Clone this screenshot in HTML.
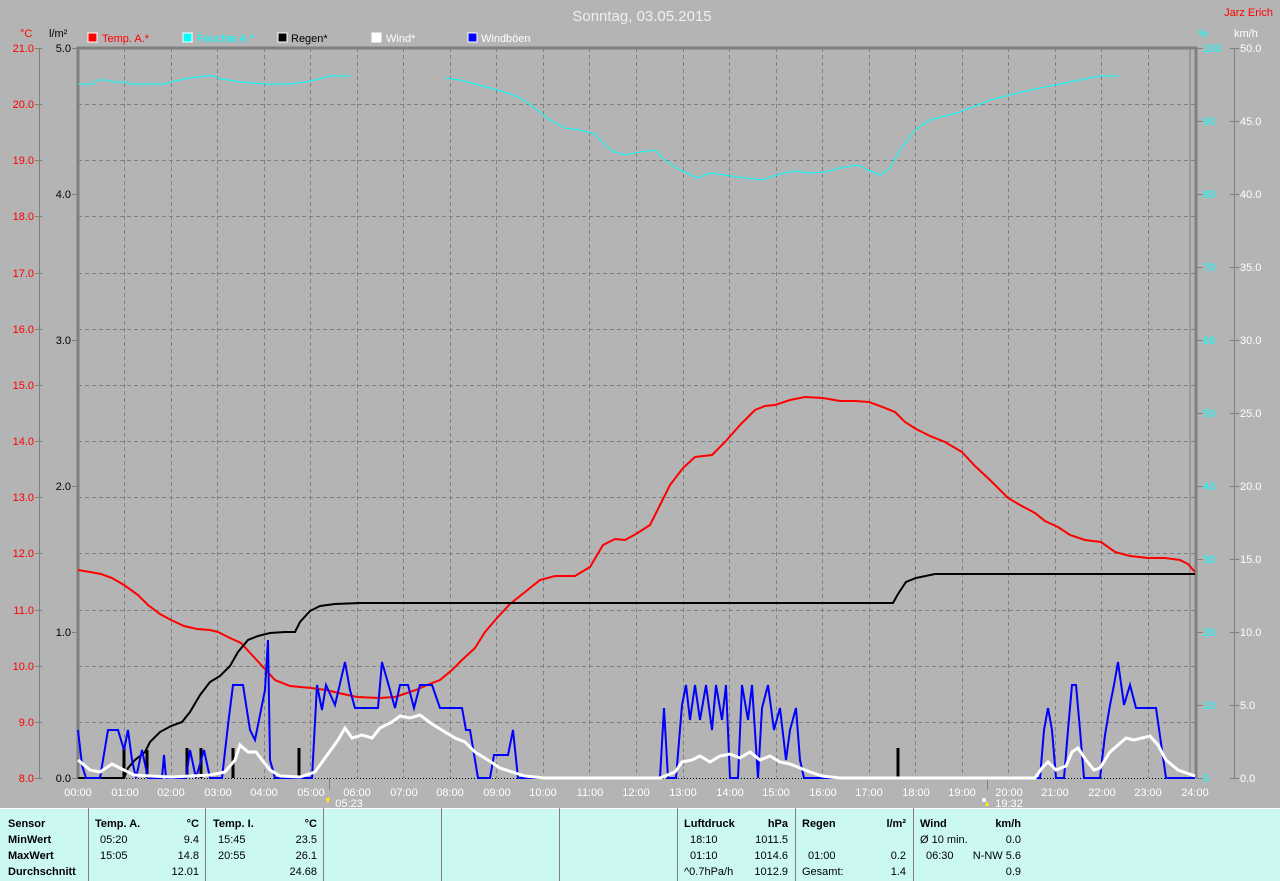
<!DOCTYPE html>
<html><head><meta charset="utf-8"><style>
html,body{margin:0;padding:0;background:#b4b4b4;}
body{width:1280px;height:881px;overflow:hidden;position:relative;font-family:"Liberation Sans",sans-serif;}
svg text{font-family:"Liberation Sans",sans-serif;font-size:11px;}
</style></head><body>
<svg width="1280" height="881" viewBox="0 0 1280 881" xmlns="http://www.w3.org/2000/svg" style="position:absolute;left:0;top:0">
<rect width="1280" height="881" fill="#b4b4b4"/>
<text x="642" y="21" text-anchor="middle" fill="#f0f0f0" style="font-size:15px">Sonntag, 03.05.2015</text>
<text x="1273" y="16" text-anchor="end" fill="#ff0000" style="font-size:11px">Jarz Erich</text>
<!-- legend -->
<text x="20" y="37" fill="#ff0000">°C</text>
<text x="49" y="37" fill="#000">l/m²</text>
<rect x="88" y="33" width="9" height="9" fill="#ff0000" stroke="#fff"/><text x="102" y="42" fill="#ff0000">Temp. A.*</text>
<rect x="183" y="33" width="9" height="9" fill="#00ffff" stroke="#fff"/><text x="197" y="42" fill="#00ffff">Feuchte A.*</text>
<rect x="278" y="33" width="9" height="9" fill="#000" stroke="#fff"/><text x="291" y="42" fill="#000">Regen*</text>
<rect x="372" y="33" width="9" height="9" fill="#fff" stroke="#fff"/><text x="386" y="42" fill="#fff">Wind*</text>
<rect x="468" y="33" width="9" height="9" fill="#0000ff" stroke="#fff"/><text x="481" y="42" fill="#fff">Windböen</text>
<text x="1198" y="37" fill="#00ffff">%</text>
<text x="1234" y="37" fill="#fff">km/h</text>
<!-- grid -->
<g stroke="#808080" stroke-dasharray="4,3" stroke-width="1">
<line x1="78" y1="104.5" x2="1195" y2="104.5"/><line x1="78" y1="160.5" x2="1195" y2="160.5"/><line x1="78" y1="216.5" x2="1195" y2="216.5"/><line x1="78" y1="273.5" x2="1195" y2="273.5"/><line x1="78" y1="329.5" x2="1195" y2="329.5"/><line x1="78" y1="385.5" x2="1195" y2="385.5"/><line x1="78" y1="441.5" x2="1195" y2="441.5"/><line x1="78" y1="497.5" x2="1195" y2="497.5"/><line x1="78" y1="553.5" x2="1195" y2="553.5"/><line x1="78" y1="610.5" x2="1195" y2="610.5"/><line x1="78" y1="666.5" x2="1195" y2="666.5"/><line x1="78" y1="722.5" x2="1195" y2="722.5"/>
<line x1="124.5" y1="48" x2="124.5" y2="778"/><line x1="171.5" y1="48" x2="171.5" y2="778"/><line x1="217.5" y1="48" x2="217.5" y2="778"/><line x1="264.5" y1="48" x2="264.5" y2="778"/><line x1="310.5" y1="48" x2="310.5" y2="778"/><line x1="357.5" y1="48" x2="357.5" y2="778"/><line x1="403.5" y1="48" x2="403.5" y2="778"/><line x1="450.5" y1="48" x2="450.5" y2="778"/><line x1="496.5" y1="48" x2="496.5" y2="778"/><line x1="543.5" y1="48" x2="543.5" y2="778"/><line x1="589.5" y1="48" x2="589.5" y2="778"/><line x1="636.5" y1="48" x2="636.5" y2="778"/><line x1="683.5" y1="48" x2="683.5" y2="778"/><line x1="729.5" y1="48" x2="729.5" y2="778"/><line x1="776.5" y1="48" x2="776.5" y2="778"/><line x1="822.5" y1="48" x2="822.5" y2="778"/><line x1="869.5" y1="48" x2="869.5" y2="778"/><line x1="915.5" y1="48" x2="915.5" y2="778"/><line x1="962.5" y1="48" x2="962.5" y2="778"/><line x1="1008.5" y1="48" x2="1008.5" y2="778"/><line x1="1055.5" y1="48" x2="1055.5" y2="778"/><line x1="1101.5" y1="48" x2="1101.5" y2="778"/><line x1="1148.5" y1="48" x2="1148.5" y2="778"/>
</g>
<!-- frame -->
<path d="M78 778 V48 H1196 V778" fill="none" stroke="#808080" stroke-width="3"/>
<line x1="1190" y1="48" x2="1190" y2="778" stroke="#808080"/>
<line x1="39.5" y1="48" x2="39.5" y2="778" stroke="#808080"/>
<line x1="1234.5" y1="48" x2="1234.5" y2="778" stroke="#808080"/>
<line x1="78" y1="778.5" x2="1196" y2="778.5" stroke="#000" stroke-dasharray="1,2"/>
<!-- left labels -->
<g fill="#ff0000" text-anchor="end">
<text x="34" y="52">21.0</text><text x="34" y="108">20.0</text><text x="34" y="164">19.0</text><text x="34" y="220">18.0</text><text x="34" y="277">17.0</text><text x="34" y="333">16.0</text><text x="34" y="389">15.0</text><text x="34" y="445">14.0</text><text x="34" y="501">13.0</text><text x="34" y="557">12.0</text><text x="34" y="614">11.0</text><text x="34" y="670">10.0</text><text x="34" y="726">9.0</text><text x="34" y="782">8.0</text>
</g>
<g stroke="#808080"><path d="M35 48.5h7M35 104.5h7M35 160.5h7M35 216.5h7M35 273.5h7M35 329.5h7M35 385.5h7M35 441.5h7M35 497.5h7M35 553.5h7M35 610.5h7M35 666.5h7M35 722.5h7M35 778.5h7M72 48.5h6M72 194.5h6M72 340.5h6M72 486.5h6M72 632.5h6M72 778.5h6"/></g>
<g fill="#000" text-anchor="end">
<text x="71" y="52">5.0</text><text x="71" y="198">4.0</text><text x="71" y="344">3.0</text><text x="71" y="490">2.0</text><text x="71" y="636">1.0</text><text x="71" y="782">0.0</text>
</g>
<!-- right labels -->
<g stroke="#808080"><path d="M1196 48.5h7M1196 121.5h7M1196 194.5h7M1196 267.5h7M1196 340.5h7M1196 413.5h7M1196 486.5h7M1196 559.5h7M1196 632.5h7M1196 705.5h7M1196 778.5h7M1230 48.5h9M1230 121.5h9M1230 194.5h9M1230 267.5h9M1230 340.5h9M1230 413.5h9M1230 486.5h9M1230 559.5h9M1230 632.5h9M1230 705.5h9M1230 778.5h9"/></g>
<g fill="#00ffff"><text x="1203" y="52">100</text><text x="1203" y="125">90</text><text x="1203" y="198">80</text><text x="1203" y="271">70</text><text x="1203" y="344">60</text><text x="1203" y="417">50</text><text x="1203" y="490">40</text><text x="1203" y="563">30</text><text x="1203" y="636">20</text><text x="1203" y="709">10</text><text x="1203" y="782">0</text></g>
<g fill="#fff"><text x="1240" y="52">50.0</text><text x="1240" y="125">45.0</text><text x="1240" y="198">40.0</text><text x="1240" y="271">35.0</text><text x="1240" y="344">30.0</text><text x="1240" y="417">25.0</text><text x="1240" y="490">20.0</text><text x="1240" y="563">15.0</text><text x="1240" y="636">10.0</text><text x="1240" y="709">5.0</text><text x="1240" y="782">0.0</text></g>
<!-- x labels -->
<g fill="#fff" text-anchor="middle">
<text x="78" y="796">00:00</text><text x="125" y="796">01:00</text><text x="171" y="796">02:00</text><text x="218" y="796">03:00</text><text x="264" y="796">04:00</text><text x="311" y="796">05:00</text><text x="357" y="796">06:00</text><text x="404" y="796">07:00</text><text x="450" y="796">08:00</text><text x="497" y="796">09:00</text><text x="543" y="796">10:00</text><text x="590" y="796">11:00</text><text x="636" y="796">12:00</text><text x="683" y="796">13:00</text><text x="730" y="796">14:00</text><text x="776" y="796">15:00</text><text x="823" y="796">16:00</text><text x="869" y="796">17:00</text><text x="916" y="796">18:00</text><text x="962" y="796">19:00</text><text x="1009" y="796">20:00</text><text x="1055" y="796">21:00</text><text x="1102" y="796">22:00</text><text x="1148" y="796">23:00</text><text x="1195" y="796">24:00</text>
<text x="349" y="807">05:23</text><text x="1009" y="807">19:32</text>
</g>
<line x1="329.5" y1="778" x2="329.5" y2="790" stroke="#808080"/><line x1="987.5" y1="778" x2="987.5" y2="790" stroke="#808080"/>
<path d="M326 798l2 6 2-6z" fill="#ffee00"/><path d="M985 806l2-5 2 5z" fill="#ffee00"/><circle cx="984" cy="800" r="2" fill="#fff"/>
<!-- humidity -->
<polyline fill="none" stroke="#00ffff" stroke-width="1" points="78,84 93,84 97,80 106,80 113,82 124,82 132,84 148,84 166,84 171,82 184,79 204,76 215,76 220,79 229,80 240,82 264,84 290,84 305,82 315,80 330,76 350,76"/>
<polyline fill="none" stroke="#00ffff" stroke-width="1" points="445,78 460,80 475,84 490,88 505,92 520,98 535,108 550,120 565,128 580,130 595,134 605,145 615,152 625,155 640,152 655,150 665,160 680,170 698,178 710,173 725,175 745,178 762,180 780,174 795,171 810,173 825,172 840,168 858,165 868,170 880,175 890,168 900,150 915,130 930,120 945,116 960,112 975,106 990,100 1010,95 1030,90 1050,86 1070,82 1090,78 1100,76 1118,76"/>
<!-- temp -->
<polyline fill="none" stroke="#ff0000" stroke-width="2" points="78,570 90,572 101,574 112,578 124,585 138,595 148,605 160,614 171,620 184,626 197,629 210,630 218,632 230,638 241,643 252,655 264,668 275,680 290,686 311,688 326,690 343,694 357,697 380,698 395,697 404,694 416,690 427,685 440,680 452,670 462,660 475,648 485,632 497,618 510,604 525,592 540,580 555,576 575,576 590,567 603,545 615,539 625,540 636,534 650,525 660,505 670,485 683,468 695,457 712,455 725,442 740,425 755,410 765,406 775,405 790,400 805,397 823,398 840,401 855,401 869,402 880,406 895,412 905,422 916,429 930,436 945,442 962,452 975,466 990,480 1008,498 1020,505 1035,513 1045,521 1058,527 1070,535 1085,540 1101,542 1115,552 1130,556 1148,558 1165,558 1180,560 1188,564 1195,572"/>
<!-- rain -->
<polyline fill="none" stroke="#000" stroke-width="2" points="78,778 124,778 128,768 135,760 145,752 150,742 160,732 171,726 182,722 190,712 200,695 210,682 220,676 230,666 238,652 248,640 258,636 270,633 285,632 295,632 300,622 310,611 320,606 335,604 360,603 893,603 898,594 906,582 916,578 935,574 1195,574"/>
<g stroke="#000" stroke-width="3"><path d="M124 748V778M147 750V778M187 748V778M201 748V778M233 748V778M299 748V778M898 748V778"/></g>
<!-- gusts -->
<polyline fill="none" stroke="#0000ff" stroke-width="2" points="78,730 82,765 86,778 100,778 108,730 118,730 124,750 128,730 132,760 136,778 142,750 148,778 162,778 164,755 166,778 186,778 190,750 196,778 204,750 210,778 222,778 228,725 233,685 243,685 250,730 255,740 265,690 268,640 270,760 275,778 312,778 317,685 322,710 326,685 335,705 345,662 350,690 355,708 378,708 382,662 390,690 395,708 400,685 408,685 414,708 420,685 432,685 440,708 462,708 466,730 470,730 478,778 490,778 494,755 508,755 513,730 518,778 660,778 664,708 668,778 676,778 682,705 686,685 690,720 695,685 700,720 706,685 712,730 716,685 722,720 726,685 730,778 738,778 742,685 748,720 752,685 758,778 762,708 768,685 774,730 780,708 786,760 790,730 796,708 800,760 804,778 1040,778 1044,730 1048,708 1052,730 1056,778 1064,778 1068,730 1072,685 1076,685 1080,730 1084,778 1100,778 1105,735 1110,705 1114,685 1118,662 1124,705 1130,685 1136,708 1156,708 1162,750 1166,778 1195,778"/>
<!-- wind -->
<polyline fill="none" stroke="#fff" stroke-width="3" points="78,760 90,770 100,772 112,764 124,770 134,775 150,776 171,777 210,775 225,772 235,760 240,745 248,752 256,752 262,760 270,770 280,776 300,777 315,772 325,758 338,740 345,728 352,738 362,735 372,738 380,728 392,722 400,716 410,718 420,715 432,724 445,732 455,738 465,742 475,752 488,760 500,768 512,772 525,776 545,778 660,778 675,772 682,762 692,760 700,756 710,762 720,756 730,754 740,758 750,752 760,760 770,756 780,762 790,764 800,768 810,772 822,776 840,778 1035,778 1042,768 1048,762 1056,770 1066,766 1072,752 1078,748 1086,760 1094,770 1100,768 1110,752 1118,745 1126,738 1134,740 1142,738 1150,736 1158,745 1166,760 1178,770 1195,776"/>
<!-- table -->
<rect x="0" y="808" width="1280" height="73" fill="#ccf8f4"/>
<line x1="0" y1="808.5" x2="1280" y2="808.5" stroke="#fff"/>
<g stroke="#808080"><path d="M88.5 808V881M205.5 808V881M323.5 808V881M441.5 808V881M559.5 808V881M677.5 808V881M795.5 808V881M913.5 808V881"/></g>
<g fill="#000" style="font-size:11px">
<g font-weight="bold"><text x="8" y="827">Sensor</text><text x="8" y="843">MinWert</text><text x="8" y="859">MaxWert</text><text x="8" y="875">Durchschnitt</text>
<text x="95" y="827">Temp. A.</text><text x="199" y="827" text-anchor="end">°C</text>
<text x="213" y="827">Temp. I.</text><text x="317" y="827" text-anchor="end">°C</text>
<text x="684" y="827">Luftdruck</text><text x="788" y="827" text-anchor="end">hPa</text>
<text x="802" y="827">Regen</text><text x="906" y="827" text-anchor="end">l/m²</text>
<text x="920" y="827">Wind</text><text x="1021" y="827" text-anchor="end">km/h</text></g>
<text x="100" y="843">05:20</text><text x="199" y="843" text-anchor="end">9.4</text>
<text x="100" y="859">15:05</text><text x="199" y="859" text-anchor="end">14.8</text>
<text x="199" y="875" text-anchor="end">12.01</text>
<text x="218" y="843">15:45</text><text x="317" y="843" text-anchor="end">23.5</text>
<text x="218" y="859">20:55</text><text x="317" y="859" text-anchor="end">26.1</text>
<text x="317" y="875" text-anchor="end">24.68</text>
<text x="690" y="843">18:10</text><text x="788" y="843" text-anchor="end">1011.5</text>
<text x="690" y="859">01:10</text><text x="788" y="859" text-anchor="end">1014.6</text>
<text x="684" y="875">^0.7hPa/h</text><text x="788" y="875" text-anchor="end">1012.9</text>
<text x="808" y="859">01:00</text><text x="906" y="859" text-anchor="end">0.2</text>
<text x="802" y="875">Gesamt:</text><text x="906" y="875" text-anchor="end">1.4</text>
<text x="920" y="843">Ø 10 min.</text><text x="1021" y="843" text-anchor="end">0.0</text>
<text x="926" y="859">06:30</text><text x="1021" y="859" text-anchor="end">N-NW 5.6</text>
<text x="1021" y="875" text-anchor="end">0.9</text>
</g>
</svg>
</body></html>
